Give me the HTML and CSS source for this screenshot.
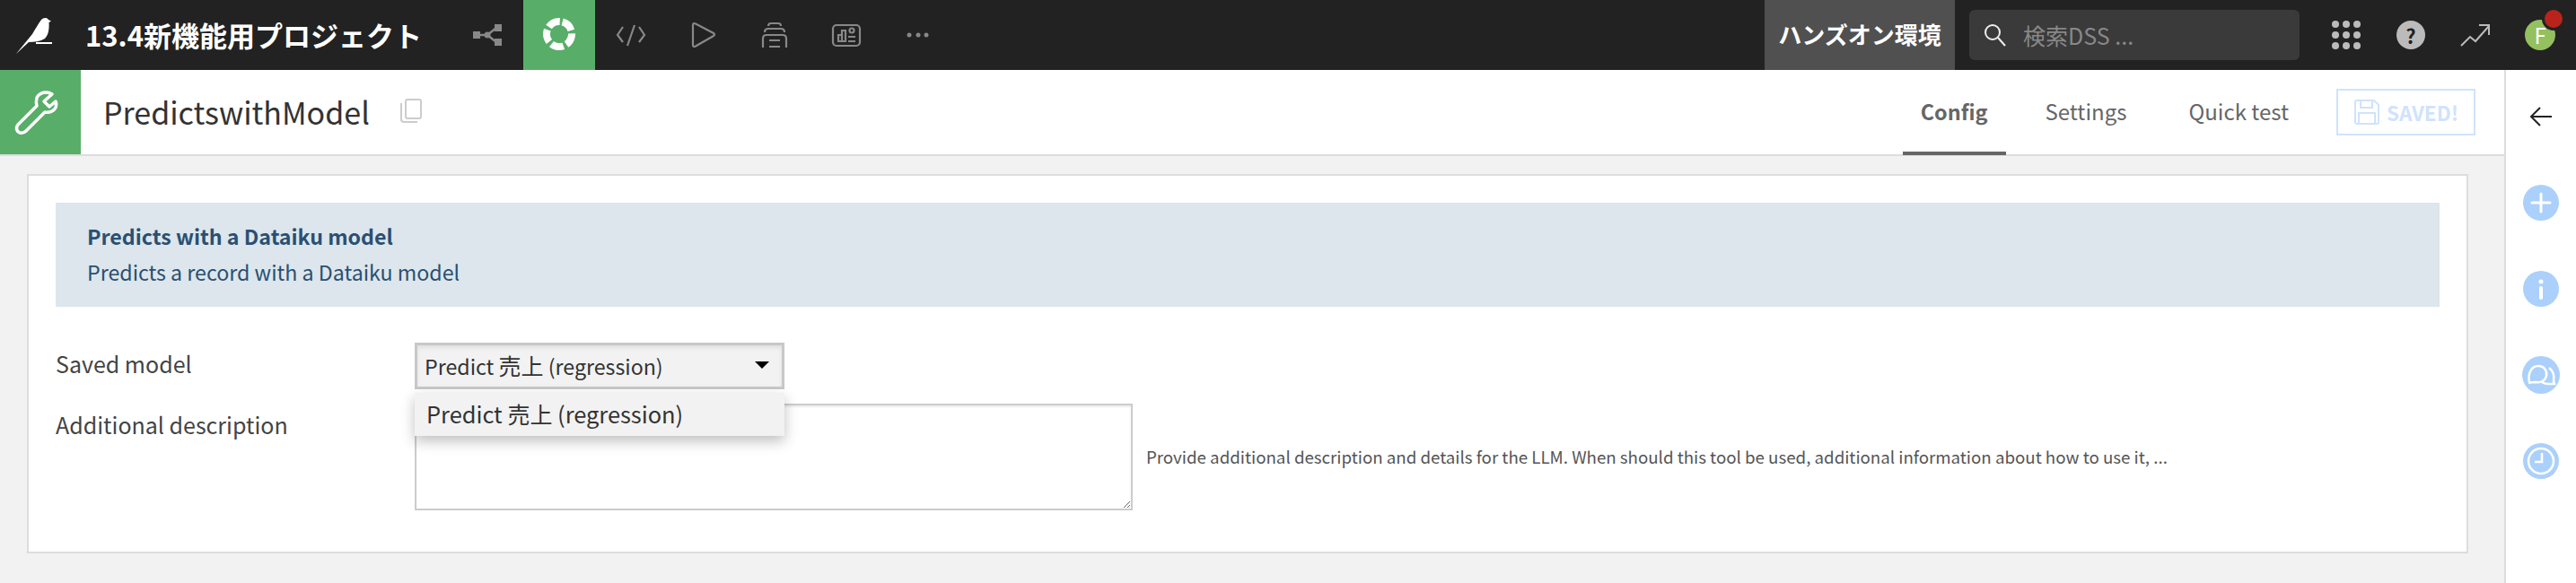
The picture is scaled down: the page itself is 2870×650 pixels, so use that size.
FILE: index.html
```html
<!DOCTYPE html>
<html lang="ja">
<head>
  <meta charset="UTF-8">
  <title>PredictswithModel</title>
  <link rel="stylesheet" href="styles.css">
</head>
<body>

  <!-- Barra superior -->
  <header class="topbar">
    <svg class="logo" viewBox="0 0 78 78" width="78" height="78">
      <path fill="#fff" d="M18 60 L36 38 C39 33 43 26 46 22 C48 20 52 19 54 22 L57 23.5 L54.5 25 C55 32 54 39 50 43 C45 46 38 47 32 47 Z"/>
      <rect x="40" y="47" width="18" height="2" fill="#fff"/>
    </svg>
    <div class="project-name">13.4新機能用プロジェクト</div>

    <nav class="nav">
      <a class="nav-item">
        <svg viewBox="0 0 80 78" width="80" height="78" fill="#888" stroke="#888">
          <rect x="24" y="35" width="8" height="8" stroke="none"/>
          <rect x="48" y="27" width="8" height="8" stroke="none"/>
          <rect x="48" y="43" width="8" height="8" stroke="none"/>
          <circle cx="40" cy="39" r="3.5" stroke="none"/>
          <path d="M30 39 H40 L50 31 M40 39 L50 47" stroke-width="2.5" fill="none"/>
        </svg>
      </a>
      <a class="nav-item active">
        <svg viewBox="0 0 80 78" width="80" height="78">
          <circle cx="40" cy="38" r="14" fill="none" stroke="#fff" stroke-width="8" stroke-dasharray="14 3.6" transform="rotate(-75 40 38)"/>
        </svg>
      </a>
      <a class="nav-item">
        <svg class="line" viewBox="0 0 80 78" width="80" height="78">
          <path d="M31 30 L25 39 L31 47 M49 30 L55 39 L49 47 M44 28 L36 51"/>
        </svg>
      </a>
      <a class="nav-item">
        <svg class="line" viewBox="0 0 80 78" width="80" height="78">
          <path d="M29 28 Q29 25 32 26.5 L52 37 Q54 38.5 52 40 L32 51.5 Q29 53 29 50 Z"/>
        </svg>
      </a>
      <a class="nav-item">
        <svg class="line" viewBox="0 0 80 78" width="80" height="78">
          <path d="M33 29 Q33 26 36 26 H44 Q47 26 47 29 M29 36 Q29 32 33 32 H47 Q51 32 51 36 M27 53 V43 Q27 39 31 39 H49 Q53 39 53 43 V53 M34 45 H46 M34 52 H46"/>
        </svg>
      </a>
      <a class="nav-item">
        <svg class="line" viewBox="0 0 80 78" width="80" height="78">
          <rect x="25" y="28" width="30" height="23" rx="4"/>
          <path d="M31 46 V39 H35 V46 Z M35 46 V34 H39 V46 Z M42 41 H50 M42 46 H50"/>
          <circle cx="46" cy="34" r="2.5"/>
        </svg>
      </a>
      <a class="nav-item">
        <svg viewBox="0 0 80 78" width="80" height="78" fill="#888">
          <circle cx="30" cy="39" r="2.5"/>
          <circle cx="40" cy="39" r="2.5"/>
          <circle cx="49" cy="39" r="2.5"/>
        </svg>
      </a>
    </nav>

    <div class="env">ハンズオン環境</div>
    <div class="search">
      <svg viewBox="0 0 30 30" width="30" height="30" fill="none" stroke="#eee" stroke-width="2">
        <circle cx="12" cy="12" r="8"/>
        <path d="M18 18 L26 27"/>
      </svg>
      <span>検索DSS ...</span>
    </div>

    <a class="top-icon">
      <svg viewBox="0 0 32 32" width="32" height="32" fill="#bbb">
        <circle cx="4" cy="4" r="4"/><circle cx="16" cy="4" r="4"/><circle cx="28" cy="4" r="4"/>
        <circle cx="4" cy="16" r="4"/><circle cx="16" cy="16" r="4"/><circle cx="28" cy="16" r="4"/>
        <circle cx="4" cy="28" r="4"/><circle cx="16" cy="28" r="4"/><circle cx="28" cy="28" r="4"/>
      </svg>
    </a>
    <a class="top-icon"><span class="help">?</span></a>
    <a class="top-icon">
      <svg viewBox="0 0 34 26" width="34" height="26" fill="none" stroke="#bbb" stroke-width="2">
        <path d="M1 25 L11 15 L17 20 L32 3 M21 2 H32 V13"/>
      </svg>
    </a>
    <a class="top-icon">
      <span class="avatar">F<span class="avatar-dot"></span></span>
    </a>
  </header>

  <div class="main">
    <div class="page">
      <!-- Cabeçalho do objeto -->
      <div class="subheader">
        <div class="object-icon">
          <svg viewBox="0 0 90 94" width="90" height="94" fill="none" stroke="#fff" stroke-width="3.5" stroke-linejoin="round">
            <path d="M58 27 C52 23 44 25 41 31 C40 35 40 37 41 40 L20 61 C17 65 19 69 22 70 C25 71 27 70 29 68 L50 47 C55 48 60 46 62 42 C63 39 63 37 62 35 L55 41 L49 35 Z"/>
          </svg>
        </div>
        <h1 class="object-name">PredictswithModel</h1>
        <svg class="copy-icon" viewBox="0 0 26 28" width="26" height="28" fill="none" stroke="#ccc" stroke-width="2">
          <rect x="7" y="2" width="17" height="21" rx="2"/>
          <path d="M2 6 V24 Q2 27 5 27 H20"/>
        </svg>

        <div class="tabs">
          <a class="tab selected">Config</a>
          <a class="tab">Settings</a>
          <a class="tab tab-quick">Quick test</a>
        </div>
        <button class="save-btn">
          <svg viewBox="0 0 30 30" width="30" height="30" fill="none" stroke="#cfe3fb" stroke-width="2">
            <path d="M4 2 H23 L28 7 V26 Q28 28 26 28 H4 Q2 28 2 26 V4 Q2 2 4 2 Z"/>
            <path d="M8 2 V10 H21 V2 M6 28 V16 H24 V28"/>
          </svg>
          SAVED!
        </button>
      </div>

      <div class="content">
        <div class="card">
          <div class="banner">
            <h4>Predicts with a Dataiku model</h4>
            <p>Predicts a record with a Dataiku model</p>
          </div>

          <div class="form">
            <div class="row">
              <label class="row-label">Saved model</label>
              <div class="select-wrap">
                <div class="select">
                  <span>Predict <span class="cjk">売上</span> (regression)</span>
                  <span class="caret"></span>
                </div>
                <div class="dropdown">Predict <span class="cjk">売上</span> (regression)</div>
              </div>
            </div>
            <div class="row">
              <label class="row-label">Additional description</label>
              <textarea class="desc"></textarea>
              <span class="help-text">Provide additional description and details for the LLM. When should this tool be used, additional information about how to use it, ...</span>
            </div>
          </div>
        </div>
      </div>
    </div>

    <!-- Barra lateral direita -->
    <aside class="sidebar">
      <svg class="side-arrow" viewBox="0 0 26 24" width="26" height="24" fill="none" stroke="#222" stroke-width="2">
        <path d="M25 12 H2 M12 2 L2 12 L12 22"/>
      </svg>
      <svg viewBox="0 0 42 42" width="42" height="42">
        <circle cx="21" cy="21" r="20" fill="#abd0fb"/>
        <path d="M11 21 H31 M21 11 V31" stroke="#fff" stroke-width="3" stroke-linecap="round"/>
      </svg>
      <svg viewBox="0 0 42 42" width="42" height="42">
        <circle cx="21" cy="21" r="20" fill="#abd0fb"/>
        <circle cx="21" cy="13" r="2.5" fill="#fff"/>
        <path d="M21 20 V31" stroke="#fff" stroke-width="4" stroke-linecap="round"/>
      </svg>
      <svg viewBox="0 0 42 42" width="42" height="42" fill="none" stroke="#fff" stroke-width="2.5">
        <circle cx="21" cy="21" r="21" fill="#abd0fb" stroke="none"/>
        <path d="M8 29 C6 20 10 11 18 11 C25 11 28 17 27 22 C26 27 21 30 16 29 C13 29 10 29 7 30"/>
        <path d="M30 13 C35 17 36 23 35 28 L36 31 C31 31 26 32 22 29"/>
      </svg>
      <svg viewBox="0 0 42 42" width="42" height="42" fill="none" stroke="#fff" stroke-width="2.5">
        <circle cx="21" cy="21" r="20" fill="#abd0fb" stroke="none"/>
        <circle cx="21" cy="21" r="14"/>
        <path d="M22 12 V22 H14"/>
      </svg>
    </aside>
  </div>

</body>
</html>
```

FILE: styles.css
```css
* {
  margin: 0;
  padding: 0;
  box-sizing: border-box;
}

body {
  font-family: "Noto Sans CJK JP", "Noto Sans", sans-serif;
  background-color: #f2f2f2;
  color: #444;
  width: 2870px;
  height: 650px;
  overflow: hidden;
}

/* Barra superior */
.topbar {
  height: 78px;
  background-color: #222;
  display: flex;
  align-items: center;
}

.logo {
  margin-right: 17px;
}

.project-name {
  width: 408px;
  color: white;
  font-size: 31px;
  font-weight: 700;
  line-height: 76px;
  white-space: nowrap;
}

.nav {
  display: flex;
  flex: 1;
}

.nav-item {
  width: 80px;
  height: 78px;
  display: block;
}

.nav-item.active {
  background-color: #58ae68;
}

.nav-item svg {
  display: block;
}

.line {
  fill: none;
  stroke: #888;
  stroke-width: 2.2;
}

.env {
  width: 212px;
  height: 78px;
  background-color: #505050;
  color: white;
  font-size: 26px;
  font-weight: 700;
  line-height: 76px;
  text-align: center;
}

.search {
  width: 368px;
  height: 56px;
  margin: 0 16px;
  padding-left: 14px;
  background-color: #3a3a3a;
  border-radius: 6px;
  display: flex;
  align-items: center;
  gap: 16px;
  color: #888;
  font-size: 25px;
}

.top-icon {
  width: 72px;
  height: 78px;
  display: flex;
  align-items: center;
  justify-content: center;
}

.top-icon:last-child {
  margin-right: 4px;
}

.help {
  width: 32px;
  height: 32px;
  border-radius: 50%;
  background-color: #bbb;
  color: #222;
  font-size: 22px;
  font-weight: 700;
  line-height: 32px;
  text-align: center;
}

.avatar {
  position: relative;
  width: 34px;
  height: 34px;
  border-radius: 50%;
  background-color: #94c05f;
  color: white;
  font-size: 24px;
  line-height: 34px;
  text-align: center;
}

.avatar-dot {
  position: absolute;
  top: -14px;
  left: 19px;
  width: 20px;
  height: 20px;
  border-radius: 50%;
  background-color: #b8241b;
  border: 3px solid #222;
  box-sizing: content-box;
}

/* Corpo */
.main {
  display: flex;
  height: 572px;
}

.page {
  flex: 1;
  display: flex;
  flex-direction: column;
}

.subheader {
  height: 96px;
  background-color: white;
  border-bottom: 2px solid #ddd;
  display: flex;
  align-items: center;
  padding-right: 32px;
}

.object-icon {
  width: 90px;
  height: 94px;
  background-color: #58ae68;
  margin-right: 25px;
}

.object-icon svg {
  display: block;
}

.object-name {
  font-size: 34px;
  font-weight: 400;
  color: #333;
  line-height: 90px;
  margin-right: 33px;
}

.copy-icon {
  margin-top: -4px;
}

.tabs {
  display: flex;
  margin-left: auto;
  margin-right: 53px;
  height: 96px;
}

.tab {
  padding: 0 20px;
  color: #666;
  font-size: 24px;
  line-height: 94px;
}

.tab-quick {
  padding: 0;
  margin-left: 49px;
}

.tab.selected {
  font-size: 23.4px;
  font-weight: 700;
  margin-right: 24px;
  border-bottom: 4px solid #666;
}

.save-btn {
  width: 155px;
  height: 52px;
  border: 2px solid #cfe3fb;
  background-color: white;
  color: #cfe3fb;
  font-family: inherit;
  font-size: 22.5px;
  font-weight: 700;
  display: flex;
  align-items: center;
  justify-content: center;
  gap: 7px;
}

.content {
  flex: 1;
  padding: 20px 40px 0 30px;
}

.card {
  height: 423px;
  background-color: white;
  border: 2px solid #ddd;
  padding: 30px 30px 0;
}

.banner {
  height: 116px;
  background-color: #dce6ec;
  padding: 17px 35px;
  color: #2b4f72;
  font-size: 23.2px;
  line-height: 40px;
}

.banner h4 {
  font-size: 23.2px;
  font-weight: 700;
}

.form {
  margin-top: 40px;
  display: flex;
  flex-direction: column;
  gap: 16px;
}

.row {
  display: flex;
  align-items: center;
}

.row-label {
  width: 400px;
  align-self: flex-start;
  font-size: 25px;
  line-height: 47px;
  color: #444;
}

.select-wrap {
  position: relative;
}

.select {
  width: 412px;
  height: 52px;
  background-color: #f2f2f2;
  border: 3px solid #c8c8c8;
  box-shadow: inset 0 3px 4px rgba(0, 0, 0, 0.08);
  padding: 0 14px 3px 8px;
  display: flex;
  align-items: center;
  justify-content: space-between;
  font-size: 23.2px;
  color: #333;
}

.cjk {
  font-size: 25px;
}

.caret {
  width: 0;
  height: 0;
  border-left: 8px solid transparent;
  border-right: 8px solid transparent;
  border-top: 8px solid black;
}

.dropdown {
  position: absolute;
  z-index: 5;
  top: 56px;
  left: 0;
  width: 412px;
  height: 48px;
  padding-left: 13px;
  background-color: #f2f2f2;
  box-shadow: 0 6px 14px rgba(0, 0, 0, 0.25);
  font-size: 25.4px;
  line-height: 46px;
  color: #333;
}

.desc {
  width: 800px;
  height: 119px;
  border: 2px solid #ccc;
  box-shadow: inset 0 2px 2px rgba(0, 0, 0, 0.08);
  background-color: white;
}

.help-text {
  margin: -3px 0 0 15px;
  font-size: 18.7px;
  color: #555;
  white-space: nowrap;
}

/* Barra lateral */
.sidebar {
  width: 80px;
  background-color: white;
  border-left: 2px solid #ddd;
  display: flex;
  flex-direction: column;
  align-items: center;
  padding-top: 40px;
  gap: 54px;
}

.side-arrow {
  margin-bottom: 9px;
}
```
